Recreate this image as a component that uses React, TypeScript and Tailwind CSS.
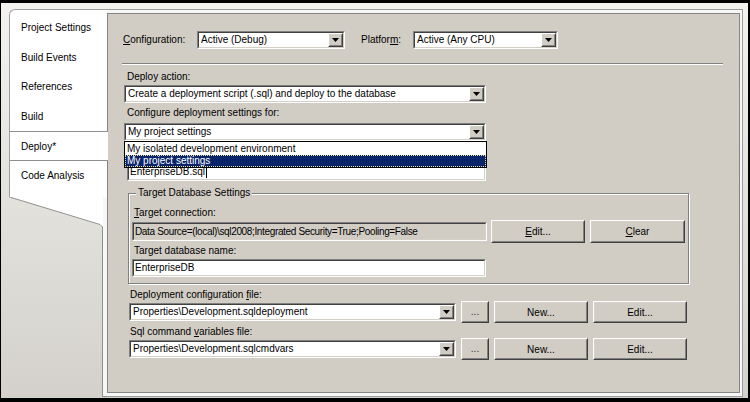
import React from 'react';

const PANEL = 'bg-[#d1cdc5]';

function Sunken({ className, bg, children }: { className: string; bg: string; children?: React.ReactNode }) {
  return (
    <div className={`border border-t-[#808080] border-l-[#808080] border-r-white border-b-white ${className}`}>
      <div className={`flex h-full items-center border border-t-[#404040] border-l-[#404040] border-r-[#d4d0c8] border-b-[#d4d0c8] ${bg}`}>
        {children}
      </div>
    </div>
  );
}

function Raised({ className, children }: { className: string; children?: React.ReactNode }) {
  return (
    <div className={`border border-t-white border-l-white border-r-[#404040] border-b-[#404040] ${PANEL} ${className}`}>
      <div className="flex h-full items-center justify-center border border-t-[#d4d0c8] border-l-[#d4d0c8] border-r-[#808080] border-b-[#808080]">
        {children}
      </div>
    </div>
  );
}

function Arrow() {
  return (
    <svg width="7" height="4" viewBox="0 0 7 4">
      <path d="M0 0h7L3.5 4z" fill="#000" />
    </svg>
  );
}

function Combo({ className, text }: { className: string; text: string }) {
  return (
    <Sunken className={`h-[18px] ${className}`} bg="bg-white">
      <span className="flex-1 truncate pl-[2px] leading-[12px]">{text}</span>
      <Raised className="h-full w-[15px] shrink-0">
        <Arrow />
      </Raised>
    </Sunken>
  );
}

function Label({ className, children }: { className: string; children?: React.ReactNode }) {
  return <div className={`h-[12px] leading-[12px] whitespace-nowrap ${className}`}>{children}</div>;
}

function U({ children }: { children: React.ReactNode }) {
  return <span className="underline underline-offset-[1px]">{children}</span>;
}

function FileRow({ className, value }: { className: string; value: string }) {
  return (
    <div className={`flex h-[22px] items-center ${className}`}>
      <Combo className="w-[327px]" text={value} />
      <Raised className="ml-[5px] h-[22px] w-[28px]">
        <span className="text-[#333] leading-[10px]">...</span>
      </Raised>
      <Raised className="ml-[5px] h-[22px] w-[94px]">New...</Raised>
      <Raised className="ml-[5px] h-[22px] w-[94px]">Edit...</Raised>
    </div>
  );
}

const TABS = ['Project Settings', 'Build Events', 'References', 'Build', 'Deploy*', 'Code Analysis'];

export default function App() {
  return (
    <div className="box-border h-[402px] w-[750px] border-t-[3px] border-l border-r-2 border-b-4 border-black bg-gradient-to-b from-[#f3f2ef] to-[#d3d1ca] pt-[6px] pl-[8px] pr-[5px] pb-[1px] font-['Liberation_Sans',Arial,sans-serif] text-[10px] text-black">
      <div className="flex h-full">
        {/* Tab list */}
        <div className="flex w-[98px] shrink-0 flex-col">
          <div className="h-[188px] rounded-tl-[6px] border-t border-l border-[#9d9d9d] bg-white pt-[3px]">
            {TABS.map((t) =>
              t === 'Deploy*' ? (
                <div
                  key={t}
                  className="relative z-10 flex h-[29.6px] w-[calc(100%+1px)] items-center border-y border-[#8f8f8f] bg-white pl-[11px]"
                >
                  {t}
                </div>
              ) : (
                <div key={t} className="flex h-[29.6px] items-center pl-[11px]">
                  {t}
                </div>
              )
            )}
          </div>
          <svg width="98" height="200" viewBox="0 0 98 200" className="block">
            <polygon points="0,0 91,28 94,30 94,0" fill="#ffffff" />
            <rect x="94" y="0" width="4" height="200" fill="#f7f7f7" />
            <polyline
              points="0.5,0 91,27.5 93.5,30 93.5,199.5 98,199.5"
              fill="none"
              stroke="#8e8e8e"
              strokeWidth="1"
            />
          </svg>
        </div>

        {/* Page frame */}
        <div className="flex flex-1 flex-col border-t border-r border-b border-[#9d9d9d] bg-[#f7f7f7] pt-[3px] pr-[2px] pb-[3px]">
          <div className={`flex flex-1 flex-col items-start border border-[#858585] ${PANEL}`}>
            {/* Configuration / Platform */}
            <div className="mt-[17px] ml-[15px] flex h-[18px] items-center">
              <Label className="w-[74px]">
                <U>C</U>onfiguration:
              </Label>
              <Combo className="w-[148px]" text="Active (Debug)" />
              <Label className="ml-[16px] w-[52px]">
                Platfor<U>m</U>:
              </Label>
              <Combo className="w-[145px]" text="Active (Any CPU)" />
            </div>

            <div className="mt-[14px] ml-[14px] h-[2px] w-[601px] border-t border-b border-t-[#808080] border-b-white" />

            <Label className="mt-[6px] ml-[19px]">Deploy action:</Label>
            <Combo className="mt-[2px] ml-[16px] w-[362px]" text="Create a deployment script (.sql) and deploy to the database" />

            <Label className="mt-[4px] ml-[19px]">Configure deployment settings for:</Label>
            <div className="relative mt-[4px] ml-[16px]">
              <Combo className="w-[362px]" text="My project settings" />
              <div className="absolute top-full left-0 z-20 w-[363px] border border-black bg-white">
                <div className="h-[13px] truncate pl-[2px] leading-[13px]">My isolated development environment</div>
                <div className="h-[12px] truncate border border-dotted border-[#e9dfa0] bg-[#0a246a] pl-[1px] leading-[10px] text-white">
                  My project settings
                </div>
              </div>
            </div>

            {/* label of the script name box sits under the open list */}
            <Label className="mt-[5px] ml-[19px]" />
            <Sunken className="mt-[5px] ml-[19px] h-[18px] w-[359px]" bg="bg-white">
              <span className="pl-[1px] leading-[12px]">EnterpriseDB.sql</span>
              <span className="ml-[1px] h-[11px] w-px bg-black" />
            </Sunken>

            {/* Target Database Settings */}
            <div className="mt-[12px] ml-[20px] flex w-[561px] flex-col items-start border border-[#808080] pb-[6px] shadow-[inset_1px_1px_0_#fff,1px_1px_0_#fff]">
              <span className={`-mt-[7px] ml-[7px] h-[12px] px-[2px] leading-[12px] ${PANEL}`}>Target Database Settings</span>
              <Label className="mt-[8px] ml-[5px]">
                <U>T</U>arget connection:
              </Label>
              <div className="mt-[1px] ml-[3px] flex h-[23px] items-center">
                <Sunken className="h-[19px] w-[355px]" bg={PANEL}>
                  <span className="truncate pl-[1px] leading-[12px] tracking-[-0.35px]">
                    Data Source=(local)\sql2008;Integrated Security=True;Pooling=False
                  </span>
                </Sunken>
                <Raised className="ml-[4px] h-[23px] w-[94px]">
                  <span>
                    <U>E</U>dit...
                  </span>
                </Raised>
                <Raised className="ml-[5px] h-[23px] w-[95px]">
                  <span>
                    <U>C</U>lear
                  </span>
                </Raised>
              </div>
              <Label className="mt-[2px] ml-[5px]">Target database name:</Label>
              <Sunken className="mt-[2px] ml-[3px] h-[18px] w-[354px]" bg="bg-white">
                <span className="pl-[1px] leading-[12px]">EnterpriseDB</span>
              </Sunken>
            </div>

            <Label className="mt-[5px] ml-[22px]">
              Deployment configuration <U>f</U>ile:
            </Label>
            <FileRow className="ml-[21px]" value="Properties\Development.sqldeployment" />

            <Label className="mt-[3px] ml-[22px]">
              Sql command <U>v</U>ariables file:
            </Label>
            <FileRow className="ml-[21px]" value="Properties\Development.sqlcmdvars" />
          </div>
        </div>
      </div>
    </div>
  );
}
